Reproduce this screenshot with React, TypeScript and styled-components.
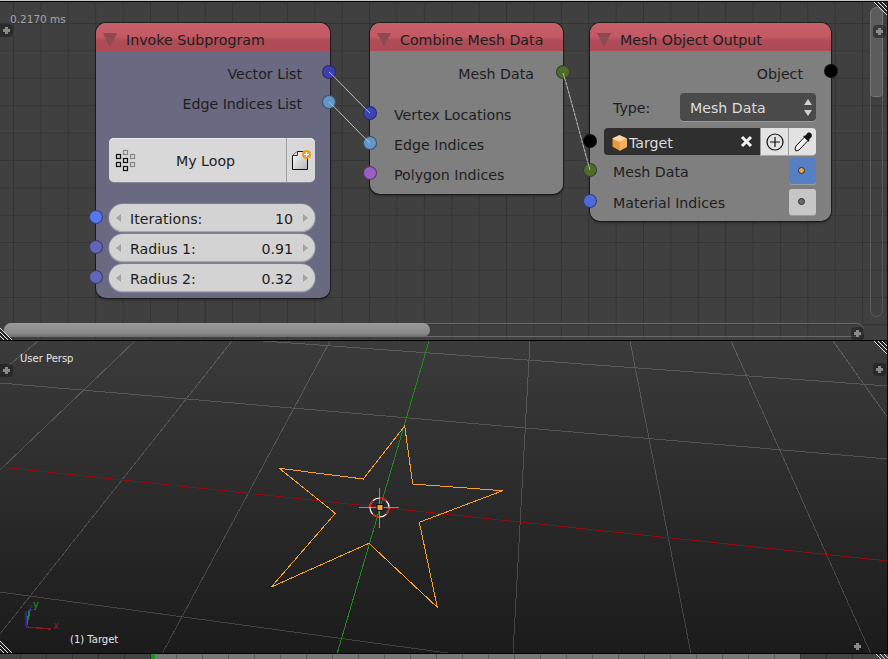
import React from "react";
import styled, { createGlobalStyle } from "styled-components";

const Global = createGlobalStyle`
  html, body { margin: 0; padding: 0; background: #000; }
  body { font-family: "DejaVu Sans", "Liberation Sans", sans-serif; overflow: hidden; }
  * { box-sizing: border-box; }
`;

const Page = styled.div`
  width: 888px;
  height: 659px;
  display: flex;
  flex-direction: column;
  background: #000;
  overflow: hidden;
`;

const TopLine = styled.div`
  height: 1px;
  flex: none;
  background: #c8c8c8;
`;

const Editor = styled.div`
  position: relative;
  flex: none;
  height: 340px;
  border-top: 1px solid #000;
  border-bottom: 1px solid #000;
  border-right: 1px solid #111;
  background-color: #404040;
  background-image:
    linear-gradient(to right, #343434 1px, transparent 1px),
    linear-gradient(to bottom, #343434 1px, transparent 1px);
  background-size: 27.4px 27.4px;
  background-position: 13px 21px;
  overflow: hidden;
`;

const Timing = styled.div`
  position: absolute;
  left: 10px;
  top: 10px;
  font-size: 10.5px;
  line-height: 14px;
  color: #a6a6a6;
`;

const Node = styled.div<{ $x: number; $y: number; $w: number; $tint: string }>`
  position: absolute;
  left: ${(p) => p.$x}px;
  top: ${(p) => p.$y - 2}px;
  width: ${(p) => p.$w}px;
  padding-bottom: 6px;
  border-radius: 10px;
  background: ${(p) => p.$tint};
  box-shadow: 0 0 0 1px rgba(20, 20, 20, 0.75), 0 2px 3px rgba(0, 0, 0, 0.35);
`;

const NodeHeader = styled.div`
  height: 28px;
  display: flex;
  align-items: center;
  gap: 9px;
  padding: 6px 0 0 7px;
  border-radius: 10px 10px 0 0;
  background: linear-gradient(to bottom, #c85f69 0%, #c25a64 50%, #b04c57 62%, #ac4a55 100%);
  font-size: 14.2px;
  color: #1e1e1e;
  white-space: nowrap;
`;

const Collapse = styled.svg`
  width: 14px;
  height: 14px;
  flex: none;
`;

const NodeBody = styled.div`
  display: flex;
  flex-direction: column;
  padding-top: 7px;
`;

const Row = styled.div<{ $h?: number; $mt?: number; $in?: number; $right?: number }>`
  position: relative;
  height: ${(p) => p.$h ?? 30}px;
  margin-top: ${(p) => p.$mt ?? 0}px;
  padding: 2px ${(p) => p.$right ?? 0}px 0 ${(p) => p.$in ?? 0}px;
  display: flex;
  align-items: center;
  font-size: 14.2px;
  color: #1e1e1e;
  white-space: nowrap;
`;

const RightRow = styled(Row)`
  justify-content: flex-end;
`;

const SpacedRow = styled(Row)`
  justify-content: space-between;
`;

const Socket = styled.span<{ $c: string; $side: "l" | "r"; $dy?: number; $dx?: number }>`
  position: absolute;
  ${(p) => (p.$side === "l" ? "left: -7px;" : `right: ${-7 + (p.$dx ?? 0)}px;`)}
  top: calc(50% - 8px + ${(p) => p.$dy ?? 0}px);
  width: 14px;
  height: 14px;
  border-radius: 50%;
  background: ${(p) => p.$c};
  border: 1px solid rgba(25, 25, 35, 0.55);
  z-index: 2;
`;

const LoopButton = styled.div`
  display: flex;
  width: 206px;
  height: 44px;
  margin: 20px 0 0 13px;
  border-radius: 5px;
  background: #d8d8d8;
  box-shadow: 0 1px 0 #8a8a98, inset 0 1px 0 #ececec;
  font-size: 14.2px;
  color: #1e1e1e;
`;

const LoopMain = styled.div`
  flex: 1;
  position: relative;
  display: flex;
  align-items: center;
  justify-content: center;
  padding: 2px 0 0 16px;
  border-right: 1px solid #a0a0a0;
`;

const LoopIcon = styled.svg`
  position: absolute;
  left: 5px;
  top: 10px;
  width: 22px;
  height: 24px;
`;

const LoopSide = styled.div`
  width: 28px;
  display: flex;
  align-items: center;
  justify-content: center;
`;

const Fields = styled.div`
  display: flex;
  flex-direction: column;
  gap: 2px;
  margin: 22px 0 0 13px;
  width: 206px;
`;

const Field = styled.div`
  position: relative;
  height: 28px;
  display: flex;
  align-items: center;
  justify-content: space-between;
  padding: 2px 22px 0 21px;
  border-radius: 14px;
  background: #d3d3d3;
  box-shadow: inset 0 -1px 0 #a8a8a8, 0 0 0 1px rgba(150, 150, 165, 0.5);
  font-size: 14.2px;
  color: #1e1e1e;
`;

const Arrow = styled.span<{ $dir: "l" | "r" }>`
  position: absolute;
  top: 10px;
  ${(p) => (p.$dir === "l" ? "left: 7px;" : "right: 7px;")}
  width: 0;
  height: 0;
  border-top: 4px solid transparent;
  border-bottom: 4px solid transparent;
  ${(p) =>
    p.$dir === "l" ? "border-right: 5px solid #a2a2a2;" : "border-left: 5px solid #a2a2a2;"}
`;

const FieldSocket = styled(Socket)`
  left: -20px;
  top: 6px;
`;

const Select = styled.div`
  position: relative;
  width: 136px;
  height: 28px;
  margin-top: -2px;
  display: flex;
  align-items: center;
  padding: 2px 0 0 10px;
  border-radius: 4px;
  background: #4a4a4a;
  box-shadow: 0 1px 0 #9a9a9a;
  color: #dcdcdc;
`;

const Updown = styled.svg`
  position: absolute;
  right: 3px;
  top: 6px;
  width: 10px;
  height: 17px;
`;

const TargetRow = styled.div`
  position: relative;
  display: flex;
  height: 27px;
  width: 212px;
  margin: 7px 0 0 14px;
  font-size: 14.2px;
`;

const TargetName = styled.div`
  flex: 1;
  position: relative;
  display: flex;
  align-items: center;
  gap: 1px;
  padding: 2px 0 0 7px;
  border-radius: 4px 0 0 4px;
  background: #2f2f2f;
  color: #dcdcdc;
`;

const Clear = styled.svg`
  position: absolute;
  right: 7px;
  top: 7px;
  width: 13px;
  height: 13px;
`;

const ToolButton = styled.div<{ $end?: boolean }>`
  width: 28px;
  display: flex;
  align-items: center;
  justify-content: center;
  background: #e2e2e2;
  border-left: 1px solid #9a9a9a;
  border-radius: ${(p) => (p.$end ? "0 4px 4px 0" : "0")};
  box-shadow: 0 1px 0 #a8a8a8;
`;

const TargetSocket = styled(Socket)`
  left: -21px;
  top: 6px;
`;

const DotButton = styled.div<{ $active?: boolean }>`
  position: absolute;
  right: 15px;
  top: 0;
  width: 27px;
  height: 26px;
  display: flex;
  align-items: center;
  justify-content: center;
  padding: 0 2px 1px 0;
  border-radius: 3px;
  background: ${(p) => (p.$active ? "#5680c4" : "#c6c6c6")};
  box-shadow: 0 1px 0 #9c9c9c;
`;

const Dot = styled.span<{ $active?: boolean }>`
  width: 7px;
  height: 7px;
  border-radius: 50%;
  background: ${(p) => (p.$active ? "#f2a440" : "#6a6a6a")};
  border: 1px solid #2c2c2c;
`;

const Links = styled.svg`
  position: absolute;
  left: 0;
  top: -2px;
  width: 888px;
  height: 339px;
  pointer-events: none;
  z-index: 3;
`;

const VScroll = styled.div`
  position: absolute;
  left: 870px;
  top: 5px;
  width: 13px;
  height: 310px;
  border-radius: 7px;
  border: 1px solid #5c5c5c;
`;

const VThumb = styled.div`
  height: 90px;
  margin: -1px;
  border-radius: 7px 7px 4px 4px;
  background: #5c5c5c;
  border: 1px solid #767676;
`;

const HScroll = styled.div`
  position: absolute;
  left: 4px;
  top: 321px;
  width: 860px;
  height: 14px;
  border-radius: 7px;
  border: 1px solid #6a6a6a;
`;

const HThumb = styled.div`
  width: 426px;
  height: 14px;
  margin: -1px;
  border-radius: 7px;
  background: linear-gradient(to bottom, #9a9a9a, #8a8a8a 70%, #6f6f6f);
`;

const Tab = styled.div<{ $pos: string; $side: "l" | "r" }>`
  position: absolute;
  ${(p) => p.$pos}
  width: 13px;
  height: 13px;
  background: rgba(28, 28, 28, 0.55);
  border-radius: ${(p) => (p.$side === "l" ? "0 4px 4px 0" : "4px")};
  z-index: 4;
  &::before, &::after {
    content: "";
    position: absolute;
    background: #8a8a8a;
  }
  &::before { left: 3px; top: 5px; width: 7px; height: 3px; }
  &::after { left: 5px; top: 3px; width: 3px; height: 7px; }
`;

const Hatch = styled.svg<{ $pos: string }>`
  position: absolute;
  ${(p) => p.$pos}
  width: 13px;
  height: 13px;
  z-index: 5;
`;

const Viewport = styled.div`
  position: relative;
  flex: none;
  height: 312px;
  overflow: hidden;
  border-right: 1px solid #000;
  background: linear-gradient(to bottom, #3b3b3b 0%, #1b1b1b 100%);
`;

const Scene = styled.svg`
  display: block;
  width: 888px;
  height: 312px;
`;

const ViewLabel = styled.div<{ $pos: string }>`
  position: absolute;
  ${(p) => p.$pos}
  font-size: 10px;
  line-height: 12px;
  color: #e6e6e6;
`;

const Timeline = styled.div`
  flex: none;
  position: relative;
  height: 5px;
  margin-top: 1px;
  background: linear-gradient(
    to right,
    #444 0,
    #444 151px,
    #11991a 151px,
    #11991a 155px,
    #787878 155px,
    #787878 800px,
    #444 800px
  );
`;

const Ticks = styled.div`
  position: absolute;
  inset: 0;
  background-image: linear-gradient(to right, rgba(0, 0, 0, 0.28) 1px, transparent 1px);
  background-size: 26px 5px;
  background-position: 20px 0;
`;

const TimelineHatch = styled(Hatch)`
  height: 5px;
`;

const Tri = () => (
  <Collapse viewBox="0 0 14 14">
    <path d="M0 0H14L7 14Z" fill="#8e4a52" />
  </Collapse>
);

const hatchLines = [0, 4, 8];

const CornerTR = ({ pos }: { pos: string }) => (
  <Hatch $pos={pos} viewBox="0 0 13 13">
    {hatchLines.map((o) => (
      <g key={o}>
        <path d={`M${o} 0L13 ${13 - o}`} stroke="#e8e8e8" strokeWidth="1" shapeRendering="crispEdges" />
        <path d={`M${o + 1.5} 0L13 ${11.5 - o}`} stroke="#222" strokeWidth="1" shapeRendering="crispEdges" />
      </g>
    ))}
  </Hatch>
);

const CornerBL = ({ pos }: { pos: string }) => (
  <Hatch $pos={pos} viewBox="0 0 13 13">
    {hatchLines.map((o) => (
      <g key={o}>
        <path d={`M0 ${o}L${13 - o} 13`} stroke="#e8e8e8" strokeWidth="1" shapeRendering="crispEdges" />
        <path d={`M0 ${o + 1.5}L${11.5 - o} 13`} stroke="#222" strokeWidth="1" shapeRendering="crispEdges" />
      </g>
    ))}
  </Hatch>
);

const star =
  "404.7,426 412.7,484 502.7,490.7 419.3,522.3 437.3,607.3 369,543.3 271.3,587 335.3,513.3 279.3,468.3 363.3,479";

const gridLines: [number, number, number, number][] = [
  [263, 341, 888, 386],
  [0, 383, 444, 421],
  [444, 421, 888, 459],
  [0, 592, 455, 654],
  [530, 341, 513, 654],
  [630, 341, 691, 654],
  [731, 341, 871, 654],
  [833, 341, 888, 418],
  [330, 341, 162, 654],
  [232, 341, 0, 634],
  [135, 341, 0, 470],
  [38, 341, 0, 373],
];

const loopSquares: [number, number, string][] = [
  [2, 6, "#111"],
  [2, 14, "#111"],
  [9, 10, "#111"],
  [9, 18, "#111"],
  [9, 2, "#888"],
  [16, 6, "#888"],
  [16, 14, "#888"],
];

export default function App() {
  return (
    <Page>
      <Global />
      <TopLine />
      <Editor>
        <Timing>0.2170 ms</Timing>

        <Node $x={96} $y={23} $w={234} $tint="rgba(107,107,133,0.96)">
          <NodeHeader>
            <Tri />
            <span>Invoke Subprogram</span>
          </NodeHeader>
          <NodeBody>
            <RightRow $right={28}>
              Vector List
              <Socket $c="#3c3fb0" $side="r" $dx={1} />
            </RightRow>
            <RightRow $right={28}>
              Edge Indices List
              <Socket $c="#6497c8" $side="r" $dx={1} />
            </RightRow>
            <LoopButton>
              <LoopMain>
                <LoopIcon viewBox="0 0 22 24">
                  {loopSquares.map(([x, y, c]) => (
                    <rect key={`${x}-${y}`} x={x + 0.5} y={y + 0.5} width="4" height="4" fill="none" stroke={c} strokeWidth="1.2" />
                  ))}
                </LoopIcon>
                My Loop
              </LoopMain>
              <LoopSide>
                <svg width="20" height="22" viewBox="0 0 20 22">
                  <defs>
                    <linearGradient id="pg" x1="0" y1="0" x2="1" y2="1">
                      <stop offset="0" stopColor="#ffffff" />
                      <stop offset="1" stopColor="#b4b4b4" />
                    </linearGradient>
                  </defs>
                  <path d="M1.5 6.5L6.5 2.5H16.5V20.5H1.5Z" fill="url(#pg)" stroke="#111" />
                  <path d="M1.5 6.5H6.5V2.5" fill="#ddd" stroke="#333" />
                  <circle cx="15.5" cy="5.5" r="4.5" fill="#f29a1f" />
                  <path d="M15.5 3V8M13 5.5H18" stroke="#fff" strokeWidth="1.2" />
                </svg>
              </LoopSide>
            </LoopButton>
            <Fields>
              <Field>
                <Arrow $dir="l" />
                <FieldSocket $c="#5677ee" $side="l" />
                <span>Iterations:</span>
                <span>10</span>
                <Arrow $dir="r" />
              </Field>
              <Field>
                <Arrow $dir="l" />
                <FieldSocket $c="#6366b8" $side="l" />
                <span>Radius 1:</span>
                <span>0.91</span>
                <Arrow $dir="r" />
              </Field>
              <Field>
                <Arrow $dir="l" />
                <FieldSocket $c="#6366b8" $side="l" />
                <span>Radius 2:</span>
                <span>0.32</span>
                <Arrow $dir="r" />
              </Field>
            </Fields>
          </NodeBody>
        </Node>

        <Node $x={370} $y={23} $w={193} $tint="rgba(129,129,129,0.97)">
          <NodeHeader>
            <Tri />
            <span>Combine Mesh Data</span>
          </NodeHeader>
          <NodeBody>
            <RightRow $right={29}>
              Mesh Data
              <Socket $c="#4f6b2a" $side="r" />
            </RightRow>
            <Row $mt={11} $in={24}>
              Vertex Locations
              <Socket $c="#3c44b4" $side="l" />
            </Row>
            <Row $in={24}>
              Edge Indices
              <Socket $c="#6497c8" $side="l" />
            </Row>
            <Row $mt={1} $in={24} $h={28}>
              Polygon Indices
              <Socket $c="#9a5fc0" $side="l" />
            </Row>
          </NodeBody>
        </Node>

        <Node $x={590} $y={23} $w={241} $tint="rgba(129,129,129,0.97)">
          <NodeHeader>
            <Tri />
            <span>Mesh Object Output</span>
          </NodeHeader>
          <NodeBody>
            <RightRow $right={28}>
              Object
              <Socket $c="#000" $side="r" $dy={-1} />
            </RightRow>
            <SpacedRow $h={28} $mt={5} $in={23} $right={15}>
              Type:
              <Select>
                Mesh Data
                <Updown viewBox="0 0 10 17">
                  <path d="M5 0L9 6H1Z" fill="#cfcfcf" />
                  <path d="M5 17L1 11H9Z" fill="#cfcfcf" />
                </Updown>
              </Select>
            </SpacedRow>
            <TargetRow>
              <TargetSocket $c="#000" $side="l" />
              <TargetName>
                <svg width="17" height="18" viewBox="0 0 17 18">
                  <path d="M8.5 1L16 4.5V13L8.5 17L1 13V4.5Z" fill="#e79a3c" stroke="#3a2a18" />
                  <path d="M1 4.5L8.5 1L16 4.5L8.5 8Z" fill="#f7d7a5" />
                  <path d="M8.5 8V17L16 13V4.5Z" fill="#f0b060" />
                </svg>
                Target
                <Clear viewBox="0 0 13 13">
                  <path d="M2 2L11 11M11 2L2 11" stroke="#f4f4f4" strokeWidth="3" />
                </Clear>
              </TargetName>
              <ToolButton>
                <svg width="18" height="18" viewBox="0 0 18 18">
                  <circle cx="9" cy="9" r="8" fill="none" stroke="#111" strokeWidth="1.2" />
                  <path d="M9 4V14M4 9H14" stroke="#111" strokeWidth="1.2" />
                </svg>
              </ToolButton>
              <ToolButton $end>
                <svg width="20" height="22" viewBox="0 0 20 22">
                  <path d="M11.5 6L15 9.5L6 19L3 20L2 18L3 15Z" fill="#f0f0f0" stroke="#111" />
                  <path d="M10 5L16 11L16.5 8L18.5 6C20 3.5 17 0.5 14.5 2L12.5 4.5Z" fill="#111" />
                </svg>
              </ToolButton>
            </TargetRow>
            <Row $h={26} $mt={3} $in={23}>
              Mesh Data
              <Socket $c="#4f6b2a" $side="l" />
              <DotButton $active>
                <Dot $active />
              </DotButton>
            </Row>
            <Row $h={26} $mt={5} $in={23}>
              Material Indices
              <Socket $c="#4c6ad8" $side="l" />
              <DotButton>
                <Dot />
              </DotButton>
            </Row>
          </NodeBody>
        </Node>

        <Links viewBox="0 0 888 339">
          <g fill="none" stroke="#bdbdbd" strokeWidth="1">
            <path d="M329 72C338 80 360 104 370 113" />
            <path d="M329 102C338 110 360 134 370 143" />
            <path d="M563 73C570 95 584 150 590 170" strokeDasharray="4 0.6" />
          </g>
        </Links>

        <VScroll>
          <VThumb />
        </VScroll>
        <HScroll>
          <HThumb />
        </HScroll>
        <Tab $pos="left: 0; top: 22px;" $side="l" />
        <Tab $pos="left: 873px; top: 23px;" $side="r" />
        <Tab $pos="left: 851px; top: 325px;" $side="r" />
        <CornerTR pos="left: 874px; top: 0;" />
        <CornerBL pos="left: -1px; top: 325px;" />
      </Editor>

      <Viewport>
        <Scene viewBox="0 341 888 312">
          <defs>
            <linearGradient id="gridFade" gradientUnits="userSpaceOnUse" x1="0" y1="341" x2="0" y2="654">
              <stop offset="0" stopColor="#5c5c5c" />
              <stop offset="1" stopColor="#414141" />
            </linearGradient>
          </defs>
          <g stroke="url(#gridFade)" strokeWidth="1" shapeRendering="crispEdges" fill="none">
            {gridLines.map(([a, b, c, d]) => (
              <line key={`${a}-${b}`} x1={a} y1={b} x2={c} y2={d} />
            ))}
          </g>
          <g strokeWidth="1" shapeRendering="crispEdges" fill="none">
            <line x1="0" y1="467" x2="888" y2="561" stroke="#8a1010" />
            <line x1="429" y1="341" x2="337" y2="654" stroke="#1c8c1c" />
            <polygon points={star} stroke="#f5a030" />
            <line x1="359" y1="507.5" x2="399" y2="507.5" stroke="#8c8c8c" />
            <line x1="379.5" y1="488" x2="379.5" y2="528" stroke="#8c8c8c" />
          </g>
          <circle cx="379.5" cy="507.5" r="9.5" fill="none" stroke="#fff" strokeWidth="1.2" />
          <circle cx="379.5" cy="507.5" r="9.5" fill="none" stroke="#d41010" strokeWidth="1.4" strokeDasharray="7.5 7.4" />
          <rect x="377" y="504.5" width="6" height="6" fill="#f5a030" stroke="#111" />
          <g shapeRendering="crispEdges" fill="none">
            <line x1="26" y1="627" x2="51" y2="629" stroke="#8a1a1a" strokeWidth="1.5" />
            <line x1="26" y1="627" x2="30" y2="609" stroke="#1c8c1c" strokeWidth="2" />
            <line x1="26" y1="627" x2="26" y2="611" stroke="#2626a0" strokeWidth="2" />
          </g>
          <g fontSize="10" fontFamily="DejaVu Sans, sans-serif">
            <text x="53" y="629" fill="#8a2020">x</text>
            <text x="28" y="611" fill="#2828a8">z</text>
            <text x="33" y="608" fill="#1c9c1c">y</text>
          </g>
        </Scene>
        <ViewLabel $pos="left: 20px; top: 12px;">User Persp</ViewLabel>
        <ViewLabel $pos="left: 70px; top: 293px;">(1) Target</ViewLabel>
        <Tab $pos="left: 0; top: 23px;" $side="l" />
        <Tab $pos="left: 873px; top: 22px;" $side="r" />
        <Tab $pos="left: 851px; top: 299px;" $side="r" />
        <CornerTR pos="left: 874px; top: 0;" />
        <CornerBL pos="left: -1px; top: 299px;" />
      </Viewport>

      <Timeline>
        <Ticks />
        <TimelineHatch $pos="right: 0; top: 0;" viewBox="0 0 13 5">
          <path d="M1 0L6 5M5 0L10 5M9 0L14 5" stroke="#e0e0e0" fill="none" />
        </TimelineHatch>
      </Timeline>
    </Page>
  );
}
